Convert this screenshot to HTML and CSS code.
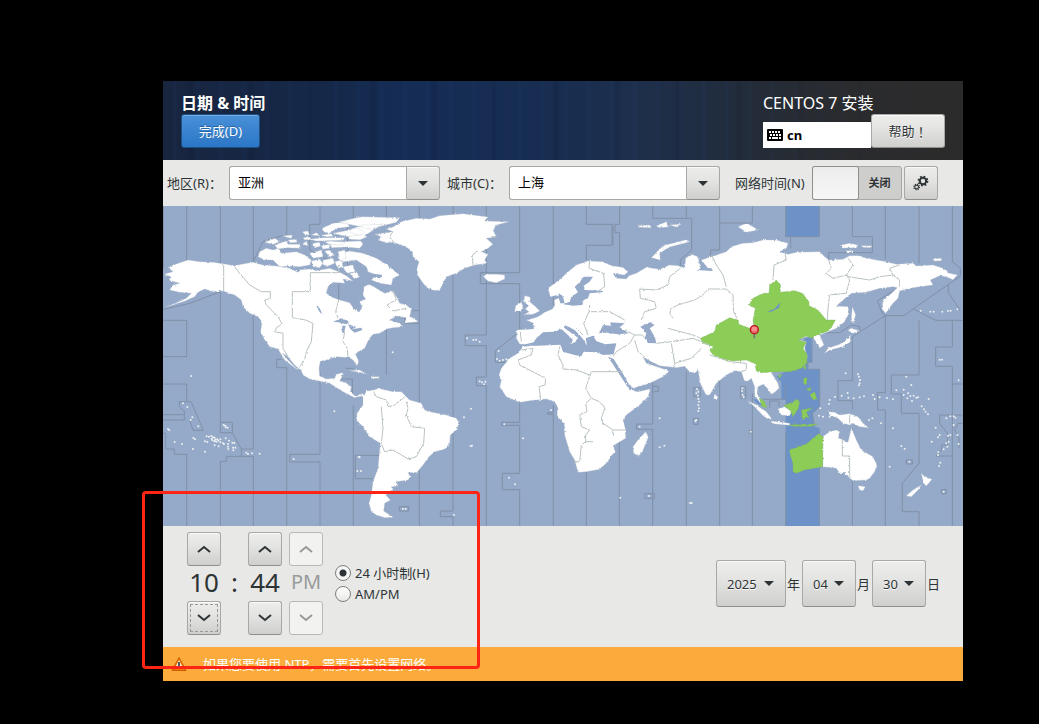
FILE: index.html
```html
<!DOCTYPE html>
<html lang="zh-CN">
<head>
<meta charset="utf-8">
<title>日期 &amp; 时间</title>
<link rel="stylesheet" href="styles.css">
</head>
<body>
<main class="installer">
  <header class="banner">
    <div class="banner-left">
      <h1 class="title">日期 &amp; 时间</h1>
      <button class="btn primary" type="button">完成(D)</button>
    </div>
    <div class="banner-right">
      <p class="product">CENTOS 7 安装</p>
      <div class="tools">
        <div class="keyboard">
          <svg width="16" height="12" viewBox="0 0 16 12" aria-hidden="true"><rect width="16" height="12" rx="1"/><path d="M2 3h12M3 6h11" stroke="#fff" stroke-width="2" stroke-dasharray="2 1"/><path d="M2 9h2M5 9h6M12 9h2" stroke="#fff" stroke-width="2"/></svg>
          <span>cn</span>
        </div>
        <button class="btn help" type="button">帮助<span class="punct">！</span></button>
      </div>
    </div>
  </header>

  <section class="toolbar">
    <label class="field-label" for="region">地区(R)<span class="punct">：</span></label>
    <div class="combo"><input id="region" type="text" value="亚洲"><button type="button" class="btn" aria-label="选择地区"><svg class="arrow" width="10" height="5" viewBox="0 0 10 5"><path d="M0 0H10L5 5Z"/></svg></button></div>
    <label class="field-label city" for="city">城市(C)<span class="punct">：</span></label>
    <div class="combo"><input id="city" type="text" value="上海"><button type="button" class="btn" aria-label="选择城市"><svg class="arrow" width="10" height="5" viewBox="0 0 10 5"><path d="M0 0H10L5 5Z"/></svg></button></div>
    <label class="net-label" for="ntp">网络时间(N)</label>
    <div class="switch"><input id="ntp" type="checkbox" role="switch"><span>关闭</span></div>
    <button type="button" class="btn gear" aria-label="配置 NTP">
      <svg width="16" height="16" viewBox="0 0 16 16" fill="none" stroke="#2e3436"><circle cx="10" cy="6" r="3.2" stroke-width="2"/><circle cx="10" cy="6" r="4.6" stroke-width="1.6" stroke-dasharray="1.8 1.81"/><circle cx="3.6" cy="12" r="1.9" stroke-width="1.1"/><circle cx="3.6" cy="12" r="2.8" stroke-width="1.2" stroke-dasharray="1.1 1.1"/></svg>
    </button>
  </section>

  <svg class="map" viewBox="0 3 2400 960" role="img" aria-label="时区地图">
    <defs>
      <filter id="coast" x="0" y="0" width="100%" height="100%"><feTurbulence type="fractalNoise" baseFrequency="0.13" numOctaves="2" seed="4" result="n"/><feDisplacementMap in="SourceGraphic" in2="n" scale="7" xChannelSelector="R" yChannelSelector="G"/></filter>
    </defs>
    <rect class="sea" y="3" width="2400" height="960"/>
    <path class="zone" d="M1868 3H1969V95H1868ZM1945 395L1947 472H1935V493H1970V605L1948 625L1955 665L1970 670V963H1868V583H1855V532L1840 515L1900 480L1925 400ZM1770 583H1790L1800 600L1785 598Z"/>
    <g class="lines">
      <path d="M1 3V190M1 313L80 295L172 260M71 3V170M0 346H71V455H0M0 537H71V590H49V605L64 618V645H0M71 590H84L121 676H90L80 645M0 629H64M0 685H8V732H34V748H71V963M172 3V652H208V683L235 732V754H190V769H172V963M172 652V683H208M271 320V732H235M235 754H271V963M271 3V170L300 110L371 87V3M356 463H341V488H371V963M471 3V58H440V135L527 180M471 500V748H380V771H471V963M571 3V45M554 45V200L527 240V290M548 490H571M530 522H568V565M571 600V963M652 751H577V821H630M670 3V40M670 370V510M769 3V317H749M769 317V355H725V328H690M769 355V963M870 3V918H832V935H870V963M970 3V390H907V422H970V516H940V542H970V963M1070 3V203H952V236H1070V380L997 437V472H1035M1070 590V652H1015V661H1070V805H1018V854H1070V963M1171 3V300M1171 600V623H1154V628H1171V963"/>
      <path d="M1270 3V58H1347V121H1270V165M1350 58V121M1370 3V58H1356V83H1370V185M1270 800V963M1369 710V963M1469 3V40H1586V135L1552 165V190M1570 3V40M1469 530V657H1420V673H1469V963M1570 500V963M1670 3V135H1643V160M1670 54H1768V3M1670 525V963M1768 565V963M1868 3V95H1969V3M1883 95V130M1868 680V963M1969 680V963M1925 472H1947V395M1935 472V493H1970V605L1948 625L1955 665M2068 3V95H2128V143H1997V165M2167 332L2068 395V527H2025V587H2068V615M2068 670V963M2167 3V170M2215 243L2143 288L2158 325L2167 332H2222L2392 213V190L2368 170V3M2167 332V563H2144V615H2167V963M2268 3V175M2356 238V262L2392 318M2252 312L2318 346H2400M2368 346V426H2318V484H2368V963M2400 537H2368M2268 346V510H2185V567H2215V625H2268V775L2218 835V920H2268V963M2400 630H2330V655L2353 685V720H2335V738L2318 753H2368M2400 655H2385L2375 675L2388 700V730M1920 383H2030L2065 360L2090 365V378"/>
      <path d="M1469 544H1486V560H1469M1592 548H1612V574H1592ZM1591 640H1606V658H1591ZM1733 544H1748V580H1733ZM1445 866H1474V880H1445ZM1759 676H1768V684H1759ZM709 905H737V918H709ZM2230 765H2248V777H2230ZM2335 854H2350V866H2335ZM1800 583H1868V535M1820 608V588H1848V605"/>
    </g>
    <g class="land" filter="url(#coast)">
      <path d="M5 207L30 200 15 187 40 177 75 165 110 170 150 172 190 178 215 183 235 178 270 172 300 180 340 183 380 190 405 202 415 194 440 192 460 197 500 190 527 200 550 212 570 228 540 222 545 235 510 232 495 245 490 265 510 278 530 285 560 293 575 315 590 320 597 305 590 290 608 282 600 270 603 245 620 238 640 250 665 265 690 258 700 275 710 295 730 300 745 313 740 335 755 340 765 350 725 354 730 338 700 333 680 345 710 355 720 365 690 368 670 372 650 385 630 388 618 402 605 430 585 440 578 448 587 470 582 482 570 465 560 458 520 455 490 465 472 468 468 490 470 513 490 522 515 520 520 508 540 503 535 520 530 528 548 533 565 545 562 560 575 572 600 566 605 577 590 573 575 578 560 570 540 560 500 535 480 530 440 522 420 510 415 498 395 480 372 452 358 445 375 465 405 495 400 492 365 465 350 440 345 432 320 425 302 400 293 380 297 350 285 335 260 325 240 305 235 285 215 270 180 258 150 260 125 252 105 262 95 275 60 290 20 303 8 307 40 293 70 280 85 265 50 262 20 255 30 240 50 235 15 225 25 217Z"/>
      <path d="M290 140L310 130 330 135 345 130 355 145 400 140 425 150 445 165 440 180 410 185 380 183 350 185 330 165 305 165 285 155ZM305 112L335 100 350 110 330 118ZM335 120L370 108 375 118 410 118 412 130 370 128 345 132ZM360 93L388 90 385 100ZM418 80L435 78 440 90 425 88ZM418 118L430 108 435 122ZM440 103L480 98 545 98 540 106 460 108ZM445 90L460 83 470 92ZM440 145L475 135 480 155 450 160ZM478 70L510 55 550 50 560 65 520 70 500 85 480 80ZM510 85L560 75 580 68 600 78 610 90 580 98 540 92ZM525 52L580 38 600 35 710 38 700 52 660 62 620 72 580 62ZM555 75L600 60 660 58 640 70 600 95 570 85ZM505 112L590 108 600 118 590 130 550 126 505 128ZM475 122L500 118 500 130 480 132ZM480 165L510 160 515 175 490 185 480 178ZM530 145L560 138 600 145 640 160 670 178 690 195 710 210 690 220 685 240 650 235 625 225 640 210 615 200 610 185 580 165 540 170 525 160ZM540 185L570 180 575 200 550 205Z"/>
      <path d="M485 112L500 108 545 112 540 120 500 118ZM420 98L440 96 445 104 425 104ZM375 105L400 103 402 112 382 113ZM450 115L470 112 472 124 455 128ZM445 168L470 163 480 175 470 188 450 185ZM525 140L545 135 550 160 530 165ZM515 170L535 165 540 185 525 190ZM555 95L600 88 612 96 590 104 560 103ZM478 90L505 86 510 94 485 96ZM560 206L580 200 590 215 575 222ZM485 138L500 136 515 150 500 155Z"/>
      <path d="M635 88L690 80 670 72 690 66 715 50 760 40 800 42 830 32 900 26 975 36 965 48 1038 50 1000 60 990 75 1000 95 970 100 990 118 975 130 955 140 975 148 965 165 972 175 935 180 905 190 880 205 850 215 840 235 830 255 815 257 795 250 780 235 765 212 762 190 768 170 750 155 748 140 735 130 715 120 690 112 670 113 645 105 655 95Z"/>
      <path d="M960 215L970 208 1000 208 1025 210 1025 222 1000 233 975 228ZM1085 272L1103 277 1100 290 1118 305 1130 318 1110 328 1082 330 1098 320 1087 312 1097 302 1083 290ZM1058 302L1075 292 1080 305 1072 320 1055 320ZM1465 158L1500 122 1570 104 1580 110 1520 126 1490 145 1492 165ZM1725 65L1750 55 1770 65 1785 75 1750 82ZM1425 62L1460 60 1465 68 1430 67ZM1480 63L1510 50 1515 66 1490 68ZM1520 60L1555 57 1540 66ZM2035 120L2060 115 2085 120 2080 128 2040 129ZM2095 122H2125V128L2100 127ZM2050 137H2070V142H2052ZM2310 162L2335 160V167L2312 168Z"/>
      <path d="M1062 375L1112 372 1112 355 1090 345 1112 340 1130 332 1145 322 1168 312 1175 302 1174 285 1190 278 1185 270 1162 275 1155 250 1175 235 1195 220 1210 205 1240 180 1275 168 1320 170 1345 182 1380 187 1395 200 1385 210 1350 205 1360 220 1390 222 1398 212 1420 205 1450 187 1490 193 1520 180 1545 182 1565 190 1568 160 1585 148 1605 155 1612 190 1635 190 1615 165 1645 155 1690 140 1705 125 1740 115 1770 113 1800 105 1840 105 1875 115 1870 130 1850 140 1875 148 1900 142 1970 140 1985 155 1997 165 2040 163 2060 152 2090 152 2110 160 2170 170 2200 178 2250 175 2260 183 2310 180 2340 190 2360 205 2383 210 2370 224 2350 215 2330 212 2302 225 2310 240 2270 245 2240 250 2210 258 2205 280 2190 295 2180 308 2168 325 2157 312 2160 285 2180 270 2203 248 2190 245 2150 250 2110 262 2065 265 2040 285 2020 303 2055 305 2058 325 2045 350 2020 370 1995 380 1970 390 1983 420 1972 428 1960 415 1950 395 1930 395 1905 404 1930 410 1925 430 1933 455 1925 480 1880 495 1835 497 1825 503 1845 535 1848 550 1835 562 1825 568 1812 548 1800 538 1785 545 1782 565 1797 597 1790 592 1775 570 1775 545 1765 520 1755 528 1745 528 1735 500 1715 497 1690 510 1660 535 1645 562 1638 572 1628 568 1612 535 1605 495 1595 505 1580 500 1565 484 1540 488 1490 482 1465 470 1440 455 1450 475 1487 487 1518 498 1500 515 1460 535 1410 550 1395 535 1375 500 1335 455 1260 445 1160 425 1070 417 1060 400Z"/>
      <path d="M1080 425L1120 420 1195 418 1200 435 1240 450 1260 438 1300 438 1340 448 1355 480 1370 500 1395 540 1410 557 1425 560 1462 552 1455 575 1430 600 1390 630 1380 645 1388 675 1388 700 1350 722 1357 740 1345 752 1335 770 1310 793 1270 800 1245 802 1235 765 1220 740 1205 690 1205 660 1182 630 1185 610 1175 590 1150 582 1100 587 1070 592 1030 575 1010 545 1015 525 1008 510 1015 490 1040 460 1065 445ZM1448 680L1456 697 1438 740 1425 752 1412 745 1410 725 1425 705ZM600 572L612 558 635 555 645 550 690 560 715 560 740 585 775 595 785 615 800 620 850 630 880 640 888 655 880 675 862 690 860 715 845 733 815 740 798 755 780 780 762 802 735 803 742 815 735 825 700 830 705 843 685 845 690 855 668 870 682 885 665 895 662 918 690 937 665 938 640 930 625 920 618 895 625 870 630 830 645 790 652 715 620 695 600 665 580 645 582 625 600 600ZM560 497L590 495 612 508 590 502ZM625 515H650V520H625Z"/>
      <path d="M1979 695L2000 680 2020 675 2030 680 2025 698 2055 712 2065 670 2080 705 2095 735 2130 755 2142 780 2135 800 2120 820 2110 825 2070 827 2050 810 2040 800 2032 808 2020 790 1979 785ZM2085 842L2107 845 2100 857 2090 855ZM2275 805L2285 815 2307 823 2290 843 2282 835ZM2275 840L2265 855 2245 875 2230 872 2250 855ZM1995 620L2015 622 2030 630 2060 626 2085 635 2100 655 2118 668 2090 665 2070 655 2060 660 2040 655 2025 640 2000 630ZM2065 370L2090 378 2070 385 2055 375ZM2062 390V410L2040 425 2000 435 1985 445 1995 430 2030 418 2050 405ZM2068 305L2078 330 2070 355 2065 340ZM1755 588L1780 600 1810 620 1825 640 1820 645 1800 632 1775 605ZM1822 648L1880 655V661L1830 656ZM1655 567L1665 577 1660 585 1652 580ZM1845 612L1865 605 1885 618 1880 632 1855 630Z"/>
    </g>
    <g class="water" filter="url(#coast)">
      <path d="M1200 298L1220 290 1225 275 1245 262 1235 245 1250 232 1262 215 1290 215 1280 230 1262 242 1265 255 1320 257 1318 262 1280 265 1275 280 1262 285 1258 300 1230 302ZM1187 264L1200 275 1205 295 1192 295 1187 278ZM1308 385L1320 360 1345 362 1340 352 1385 355 1370 367 1397 385 1365 388 1330 383ZM1432 365L1460 352 1475 360 1460 370 1475 395 1480 415 1455 414 1445 400 1450 385ZM1078 420L1112 412 1120 400 1140 382 1175 380 1195 372 1215 390 1230 405 1222 418 1238 410 1245 398 1203 368 1205 360 1235 375 1250 390 1262 405 1272 422 1268 400 1290 392 1300 408 1325 418 1360 415 1352 448 1320 450 1300 442 1262 440 1255 454 1235 450 1200 440 1192 419 1120 422ZM1335 455L1352 462 1375 498 1395 535 1410 550 1402 558 1390 540 1365 502ZM1585 203L1610 196 1650 198 1645 190 1615 188 1600 199ZM510 350L535 340 560 350 550 358 525 352ZM538 362L548 362 543 385 537 382ZM555 358L580 365 570 372 595 368 598 375 575 383 562 372ZM460 303L470 310 478 327 470 322ZM1315 635L1323 660 1318 658ZM1348 668L1353 692 1349 690ZM620 205L660 210 650 220 625 215Z"/>
    </g>
    <g class="green" filter="url(#coast)">
      <path d="M1612 400L1655 380 1660 360 1700 338 1725 345 1728 358 1760 370 1772 362 1770 345 1777 310 1758 300 1770 280 1800 265 1818 265 1820 240 1840 225 1852 240 1852 262 1895 257 1918 265 1938 290 1938 302 1965 315 1990 345 2017 345 2005 368 1990 380 1965 388 1945 400 1930 393 1905 405 1930 412 1920 430 1933 450 1930 475 1915 490 1880 500 1820 501 1795 503 1780 498 1775 475 1750 465 1710 468 1680 462 1650 450 1640 435 1652 425 1620 415ZM1878 735L1905 725 1930 717 1965 688 1980 695 1979 785 1925 795 1900 805 1890 800 1890 778ZM1862 602L1890 590 1902 582 1910 592 1905 612 1890 635 1882 616ZM1922 520L1932 518 1930 540 1922 535ZM1940 570L1955 560 1962 585 1950 583ZM1930 552L1945 548 1940 558ZM1915 615L1950 608 1930 622 1938 640 1928 635 1920 645ZM1920 485L1930 480 1926 495ZM1845 512L1857 508 1850 520ZM1788 578L1805 590 1812 610 1797 602ZM1880 660L1965 657 1945 664 1885 664Z"/>
    </g>
    <path class="baikal" d="M1812 320L1835 311 1852 292 1848 308 1825 320Z"/>
    <g class="borders" filter="url(#coast)">
      <path d="M182 180V258M215 185L230 205 260 240 295 260H322V280L305 285 310 300 345 335 357 357 340 368 335 380 360 385V430L375 455M527 180V203H442V260H388V338L428 345 450 355 445 410 430 440 425 465 410 485M527 285L518 320 525 340M545 380L540 410 553 430 555 455M690 258L700 285 672 300 690 318 730 310M690 80L680 95 692 112M985 95H1000M930 180L928 150 945 138M1072 382L1075 410M1075 435L1110 430 1105 450 1065 465 1070 480 1148 520 1146 540 1128 545 1133 582M1190 425L1185 450 1200 480 1200 492 1240 495 1280 510M1380 500H1285L1268 550 1285 580 1305 588 1320 600 1325 610 1315 640 1320 655 1350 675H1390M1285 580L1268 595 1272 620 1250 630 1255 665 1280 675 1268 690V710H1290M1268 710L1255 720 1250 770H1235M632 560L640 575 670 585 675 605 695 600 700 595 715 585 725 575M730 590L735 610 730 630 745 665 785 670 782 715 760 755 735 762 690 735 665 740 655 715 660 670 655 605M2038 700V753H2060V822M2060 630V655"/>
      <path d="M1280 165L1278 190 1322 205 1325 245 1300 262M1280 300L1278 320 1262 355 1275 390M1278 320L1340 320 1385 345M1552 190L1520 215 1515 240 1480 255 1430 252 1432 280 1475 290 1480 310 1445 320 1435 345M1645 150L1660 180 1680 210 1690 245M1690 252H1635L1620 270 1595 285 1545 300 1525 310 1520 325 1530 340M1515 370L1590 390 1612 400M1690 252L1710 270 1712 320 1722 340M1385 375L1415 390 1438 390 1445 398M1415 390L1400 415 1360 440 1350 455M1415 405L1425 440 1445 455M1480 415L1525 410 1590 400 1640 420M1525 415L1535 475 1585 460 1615 430M1535 475V488M1640 450L1700 470 1750 475V495L1735 500M1865 140L1870 165 1833 180 1830 225M1997 165L2005 190 1990 205 2010 220 2050 210 2070 180 2055 160M2050 210L2060 225 2050 265 2000 270 1995 310 1993 345M2055 215L2120 225 2150 215 2190 210 2180 190 2210 180M2190 210L2210 225V245M1240 370L1260 390"/>
    </g>
    <path class="dots" d="M60 595h0M73 606h0M88 637h0M83 645h0M106 664h0M15 672h0M19 676h0M35 711h0M57 717h0M91 699h0M96 703h0M90 732h0M126 740h0M126 709h0M133 711h0M131 694h0M138 695h0M145 693h0M150 697h0M146 702h0M155 698h0M157 704h0M163 703h0M166 707h0M160 710h0M154 709h0M172 712h0M148 706h0M180 715h0M188 700h0M198 707h0M195 717h0M183 717h0M208 713h0M214 714h0M195 725h0M196 732h0M210 728h0M217 728h0M211 736h0M155 721h0M167 724h0M172 703h0M182 660h0M187 662h0M188 667h0M194 668h0M250 743h0M255 747h0M267 745h0M290 746h0M392 762h0M85 513h0M514 619h0M587 755h0M590 757h0M583 798h0M594 798h0M689 442h0M912 400h0M931 405h0M939 404h0M950 410h0M1007 438h0M1002 462h0M1010 467h0M1020 465h0M1030 463h0M950 529h0M957 532h0M963 538h0M967 530h0M924 611h0M903 637h0M923 723h0M927 722h0M1024 658h0M1080 700h0M1038 818h0M1056 838h0M1164 615h0M1430 665h0M1490 640h0M1504 722h0M1490 727h0M1372 878h0M1458 873h0M1581 894h0M1586 894h0M1602 552h0M1606 560h0M1600 565h0M1605 572h0M1606 582h0M1608 590h0M1606 600h0M1608 610h0M1606 618h0M1600 645h0M1597 648h0M1738 550h0M1737 558h0M1739 570h0M1742 577h0M1763 680h0M720 912h0M728 912h0M873 930h0M2048 505h0M2085 508h0M2088 515h0M2091 525h0M2090 535h0M2088 541h0M2036 572h0M2054 564h0M2056 578h0M2072 580h0M2090 577h0M2103 574h0M2130 570h0M2135 582h0M2150 577h0M2172 579h0M2200 556h0M2190 583h0M2230 515h0M2245 540h0M2222 554h0M2222 570h0M2235 565h0M2233 580h0M2242 573h0M2247 588h0M2252 572h0M2260 578h0M2265 577h0M2276 604h0M2283 613h0M2288 620h0M2295 628h0M2297 582h0M2350 640h0M2362 634h0M2372 634h0M2377 638h0M2318 668h0M2330 690h0M2306 710h0M2325 697h0M2355 692h0M2362 690h0M2357 710h0M2350 715h0M2342 733h0M2326 742h0M2353 725h0M2372 660h0M2383 690h0M2387 717h0M2332 773h0M2328 783h0M2325 750h0M2239 770h0M2342 860h0M2387 526h0M2330 464h0M2337 464h0M2273 317h0M2302 320h0M2312 320h0M2338 320h0M2355 318h0M2363 317h0M2383 313h0M2180 785h0M2000 585h0M1998 597h0M2016 576h0M1972 610h0M1968 632h0M1980 635h0M2000 635h0M2118 645h0M2128 640h0M2154 655h0M2190 670h0M2215 723h0M2225 731h0"/>
    <g class="pin"><path d="M1774 385V400" stroke="#777" stroke-width="5"/><circle cx="1774" cy="374" r="12" fill="#f06a6a" stroke="#b81524" stroke-width="4"/><path d="M1767 369H1781M1767 375H1781" stroke="#ffb4b4" stroke-width="3"/></g>
  </svg>

  <section class="controls">
    <div class="clock">
      <button class="btn step" type="button" aria-label="增加小时"><svg width="14" height="8" viewBox="0 0 14 8"><path d="M1 7L7 2L13 7"/></svg></button>
      <span></span>
      <button class="btn step" type="button" aria-label="增加分钟"><svg width="14" height="8" viewBox="0 0 14 8"><path d="M1 7L7 2L13 7"/></svg></button>
      <button class="btn step ampm" type="button" disabled aria-label="上午"><svg width="14" height="8" viewBox="0 0 14 8"><path d="M1 7L7 2L13 7"/></svg></button>
      <span class="digits">10</span><span class="digits">:</span><span class="digits">44</span><span class="period ampm">PM</span>
      <button class="btn step focused" type="button" aria-label="减少小时"><svg width="14" height="8" viewBox="0 0 14 8"><path d="M1 1L7 6L13 1"/></svg></button>
      <span></span>
      <button class="btn step" type="button" aria-label="减少分钟"><svg width="14" height="8" viewBox="0 0 14 8"><path d="M1 1L7 6L13 1"/></svg></button>
      <button class="btn step ampm" type="button" disabled aria-label="下午"><svg width="14" height="8" viewBox="0 0 14 8"><path d="M1 1L7 6L13 1"/></svg></button>
    </div>
    <div class="formats">
      <label><input type="radio" name="format" checked>24 小时制(H)</label>
      <label><input type="radio" name="format">AM/PM</label>
    </div>
    <div class="date">
      <span class="pick year"><select id="year" class="btn"><option>2025</option></select><svg class="arrow" width="10" height="5" viewBox="0 0 10 5"><path d="M0 0H10L5 5Z"/></svg></span><label for="year">年</label>
      <span class="pick"><select id="month" class="btn"><option>04</option></select><svg class="arrow" width="10" height="5" viewBox="0 0 10 5"><path d="M0 0H10L5 5Z"/></svg></span><label for="month">月</label>
      <span class="pick"><select id="day" class="btn"><option>30</option></select><svg class="arrow" width="10" height="5" viewBox="0 0 10 5"><path d="M0 0H10L5 5Z"/></svg></span><label for="day">日</label>
    </div>
  </section>

  <footer class="warning">
    <svg width="16" height="16" viewBox="0 0 16 16" aria-hidden="true"><path d="M8 1.5L15 14.5H1Z" fill="#f57900" stroke="#ce5c00" stroke-linejoin="round"/><path d="M8 4L12.5 13H3.5Z" fill="#eeeeec"/><path d="M8 6V10M8 11V12.5" stroke="#2e3436" stroke-width="1.6"/></svg>
    <span>如果您要使用 NTP，需要首先设置网络。</span>
  </footer>
  <div class="highlight"></div>
</main>
</body>
</html>
```
FILE: styles.css
```css
* { box-sizing: border-box; }

body {
  margin: 0;
  padding: 81px 76px 43px 163px;
  background: #000;
  color: #2e3436;
  font: 13px/20px "Noto Sans", "Noto Sans CJK SC", sans-serif;
}

button, input, select { font: inherit; color: inherit; margin: 0; }

.installer { position: relative; background: #e8e8e6; }

.btn {
  display: flex;
  align-items: center;
  justify-content: center;
  padding: 0;
  border: 1px solid #a8a8a5;
  border-bottom-color: #8f8f8c;
  border-radius: 3px;
  background: linear-gradient(#ededec, #e4e4e2 40%, #cfcfcd);
  box-shadow: inset 0 1px #fafafa;
  text-shadow: 0 1px #fff;
}

.arrow { fill: #2e3436; }

/* Full-width marks centred in their cell */
.punct { font-family: "Noto Sans CJK TC", sans-serif; line-height: 1; }

/* Banner */
.banner {
  display: flex;
  justify-content: space-between;
  padding: 11px 18px 12px;
  color: #fff;
  background:
    linear-gradient(90deg, transparent 70%, #2b2b2c 96%),
    repeating-linear-gradient(90deg, transparent 0 9px, rgba(30, 70, 130, 0.1) 11px 12px, transparent 15px 23px),
    repeating-linear-gradient(90deg, transparent 0 23px, rgba(0, 8, 30, 0.1) 26px 28px, transparent 32px 61px),
    linear-gradient(90deg, #18253f, #152848 20%, #152c55 30%, #182d50 50%, #1d2f4c 58%, #222c3a 74%, #292b2e 90%, #2b2b2c);
}

.title { margin: 0; font-size: 16px; line-height: 22px; font-weight: 700; }

.primary {
  width: 79px;
  height: 34px;
  border-color: #1c5187;
  background: linear-gradient(#4a90d9, #3b83cf 50%, #2a76c6);
  box-shadow: inset 0 1px #76aee6;
  color: #fff;
  text-shadow: 0 -1px #2265a5;
}

.banner-right { width: 182px; }
.product { margin: 0; font-size: 16px; line-height: 22px; }
.tools { display: flex; align-items: flex-end; }

.keyboard {
  flex: 1;
  display: flex;
  align-items: center;
  gap: 4px;
  height: 26px;
  padding: 0 4px;
  background: #fff;
  color: #000;
  font-weight: 700;
}

.help { width: 74px; height: 34px; color: #2e3436; }

/* Region, city and network time */
.toolbar { display: flex; align-items: center; padding: 6px 25px 6px 4px; }
.field-label { width: 62px; white-space: nowrap; }
.city { margin-left: 7px; }
.combo { flex: 1; min-width: 0; display: flex; height: 34px; }

.combo input {
  flex: 1;
  min-width: 0;
  padding: 0 8px 2px;
  border: 1px solid #a8a8a5;
  border-right: 0;
  border-radius: 3px 0 0 3px;
  background: #fff;
  color: #000;
}

.combo .btn { width: 34px; border-radius: 0 3px 3px 0; }
.net-label { width: 77px; margin-left: 15px; white-space: nowrap; }
.switch { position: relative; width: 90px; height: 34px; }

.switch input {
  appearance: none;
  display: block;
  width: 100%;
  height: 100%;
  border: 1px solid #a8a8a5;
  border-radius: 3px;
  background: #cececc;
}

.switch input::before {
  content: "";
  display: block;
  width: 45px;
  height: 32px;
  border-radius: 2px;
  box-shadow: 0 0 0 1px #8f8f8c;
  background: linear-gradient(#ededed, #f6f6f6);
}

.switch span {
  position: absolute;
  inset: 7px 0 7px 45px;
  text-align: center;
  font-size: 11px;
  font-weight: 700;
  pointer-events: none;
}

.gear { width: 34px; height: 34px; margin-left: 2px; }

/* Map */
.map { display: block; width: 100%; }
.sea, .water { fill: #95a9c9; }
.zone, .baikal { fill: #6d92c7; }
.lines { fill: none; stroke: #8090a8; stroke-width: 3; }
.land { fill: #fff; stroke: #b9c3cc; stroke-width: 1; }
.green { fill: #8bcd57; stroke: #7aae62; stroke-width: 1; }
.borders { fill: none; stroke: #b9c2c0; stroke-width: 3; }
.dots { fill: none; stroke: #edf1f2; stroke-width: 6; stroke-linecap: round; }

/* Time and date */
.controls { display: flex; align-items: center; padding: 6px 22px 12px 24px; }
.clock { display: grid; grid-template-columns: 34px 27px 34px 41px; grid-template-rows: 34px 35px 34px; align-items: center; text-align: center; }
.step { width: 34px; height: 34px; }
.step svg { fill: none; stroke: #2e3436; stroke-width: 2; }
.step:disabled { border-color: #b8b8b6; background: #f2f2f1; box-shadow: none; }
.step:disabled svg { stroke: #999; }
.focused { outline: 1px dashed #999; outline-offset: -4px; }
.ampm { margin-left: 7px; }
.digits, .period { align-self: start; line-height: 32px; }
.digits { font-size: 26px; }
.period { font-size: 20px; color: #989b9b; }
.formats { margin-left: 12px; }
.formats label { display: flex; align-items: center; gap: 4px; height: 21px; }

.formats input {
  appearance: none;
  width: 16px;
  height: 16px;
  border: 1px solid #7f7f7c;
  border-radius: 50%;
  background: linear-gradient(#fff, #e8e8e6);
}

.formats input:checked { background: radial-gradient(circle, #2e3436 0 3px, #f6f6f6 4px); }
.date { display: flex; align-items: center; gap: 1px; margin-left: auto; }
.date label { width: 14px; }
.pick { position: relative; width: 54px; }
.year { width: 70px; }
.pick select { appearance: none; display: block; width: 100%; height: 47px; padding: 0 0 0 10px; }
.pick .arrow { position: absolute; right: 12px; top: 21px; pointer-events: none; }

.warning {
  display: flex;
  align-items: center;
  gap: 16px;
  height: 34px;
  padding: 0 8px;
  background: #fbab3c;
  color: #fff;
}

/* Callout frame around the time controls */
.highlight {
  position: absolute;
  left: -21px;
  bottom: 12px;
  width: 338px;
  height: 178px;
  border: 3px solid #ff2414;
  border-radius: 4px;
  pointer-events: none;
}
```
